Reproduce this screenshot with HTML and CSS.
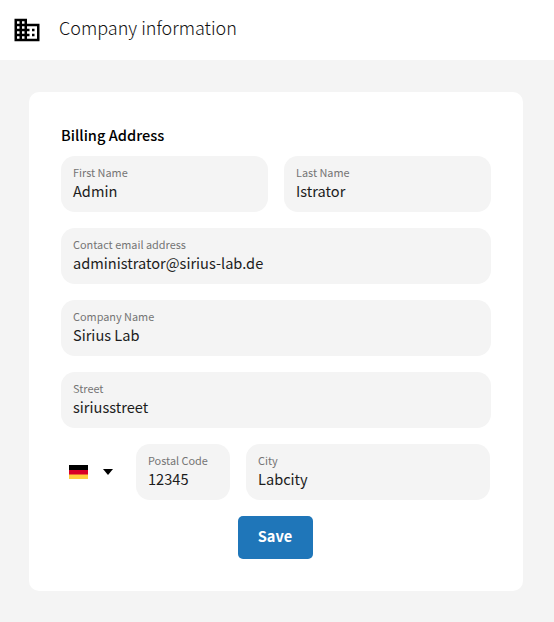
FILE: index.html
```html
<!DOCTYPE html>
<html lang="en">
<head>
  <meta charset="UTF-8">
  <title>Company information</title>
  <link rel="stylesheet" href="styles.css">
</head>
<body>
  <header class="topbar">
    <svg class="topbar-icon" viewBox="0 0 24 24" width="30" height="30">
      <path d="M12 7V3H2v18h20V7H12zM6 19H4v-2h2v2zm0-4H4v-2h2v2zm0-4H4V9h2v2zm0-4H4V5h2v2zm4 12H8v-2h2v2zm0-4H8v-2h2v2zm0-4H8V9h2v2zm0-4H8V5h2v2zm10 12h-8v-2h2v-2h-2v-2h2v-2h-2V9h8v10zm-2-8h-2v2h2v-2zm0 4h-2v2h2v-2z"/>
    </svg>
    <h1 class="topbar-title">Company information</h1>
  </header>

  <main class="card">
    <h2 class="card-title">Billing Address</h2>
    <form class="form">
      <div class="row">
        <label class="field grow">
          <span class="field-label">First Name</span>
          <span class="field-value">Admin</span>
        </label>
        <label class="field grow">
          <span class="field-label">Last Name</span>
          <span class="field-value">Istrator</span>
        </label>
      </div>
      <label class="field">
        <span class="field-label">Contact email address</span>
        <span class="field-value">administrator@sirius-lab.de</span>
      </label>
      <label class="field">
        <span class="field-label">Company Name</span>
        <span class="field-value">Sirius Lab</span>
      </label>
      <label class="field">
        <span class="field-label">Street</span>
        <span class="field-value">siriusstreet</span>
      </label>
      <div class="row">
        <div class="country">
          <svg class="flag" viewBox="0 0 19 14" width="19" height="14">
            <rect width="19" height="5" fill="#000"/>
            <rect y="5" width="19" height="5" fill="#d80027"/>
            <rect y="9.5" width="19" height="4.5" fill="#ffce3d"/>
          </svg>
          <span class="caret"></span>
        </div>
        <label class="field postal">
          <span class="field-label">Postal Code</span>
          <span class="field-value">12345</span>
        </label>
        <label class="field grow city">
          <span class="field-label">City</span>
          <span class="field-value">Labcity</span>
        </label>
      </div>
      <div class="actions">
        <button type="button" class="save">Save</button>
      </div>
    </form>
  </main>
</body>
</html>
```

FILE: styles.css
```css
* {
  box-sizing: border-box;
}

body {
  margin: 0;
  height: 622px;
  overflow: hidden;
  background: #f4f4f4;
  color: #1c1c1c;
  font-family: "Noto Sans CJK SC", "Noto Sans", sans-serif;
}

.topbar {
  display: flex;
  align-items: center;
  height: 60px;
  padding-left: 12px;
  background: #fff;
}

.topbar-icon {
  flex: none;
  fill: #000;
}

.topbar-title {
  margin: 0 0 6px 17px;
  font-size: 18px;
  font-weight: 300;
  line-height: 1;
  color: #111;
}

.card {
  width: 494px;
  height: 499px;
  margin: 32px 0 0 29px;
  padding: 32px;
  background: #fff;
  border-radius: 10px;
}

.card-title {
  margin: 0;
  height: 32px;
  font-size: 14.6px;
  font-weight: 500;
  line-height: 22px;
  color: #000;
}

.form {
  display: flex;
  flex-direction: column;
  gap: 16px;
}

.row {
  display: flex;
  gap: 16px;
}

.field {
  display: flex;
  flex-direction: column;
  height: 56px;
  padding: 8px 12px 0;
  background: #f4f4f4;
  border-radius: 14px;
}

.grow {
  flex: 1;
}

.field-label {
  font-size: 10.9px;
  line-height: 16px;
  color: #757575;
}

.field-value {
  font-size: 14.6px;
  line-height: 21px;
}

.country {
  display: flex;
  align-items: center;
  width: 59px;
  padding-left: 8px;
}

.flag {
  flex: none;
}

.caret {
  margin: 0 0 1px 15px;
  border-left: 5.5px solid transparent;
  border-right: 5.5px solid transparent;
  border-top: 6px solid #000;
}

.postal {
  width: 94px;
}

.city {
  margin-right: 1px;
}

.actions {
  display: flex;
  justify-content: center;
  padding-right: 2px;
}

.save {
  width: 75px;
  height: 43px;
  padding: 0 0 4px;
  border: none;
  border-radius: 5px;
  background: #1f76b9;
  color: #fff;
  font-family: inherit;
  font-size: 14.6px;
  font-weight: 700;
}
```
